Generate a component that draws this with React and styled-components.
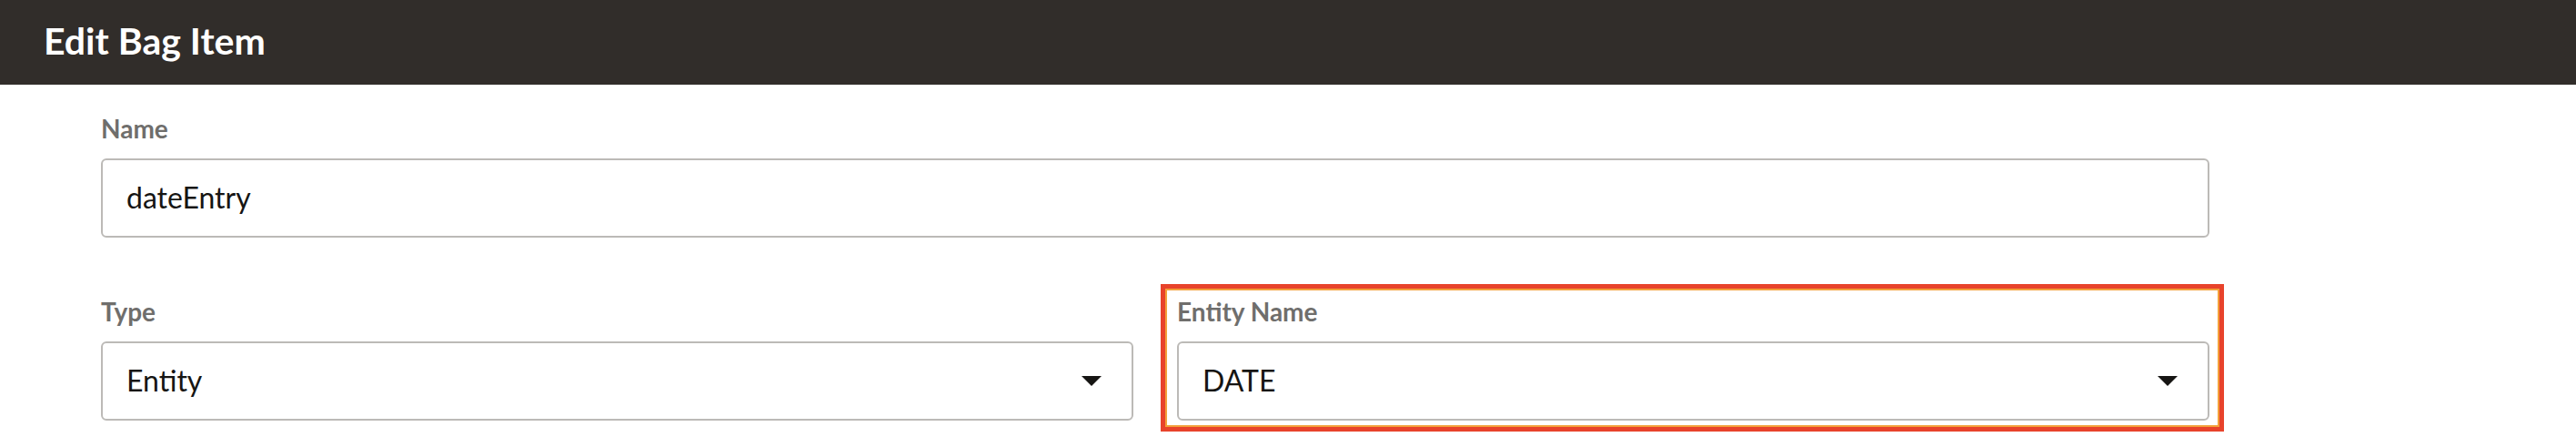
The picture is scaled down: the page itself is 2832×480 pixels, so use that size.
import React from 'react';
import styled, { createGlobalStyle } from 'styled-components';

const GlobalStyle = createGlobalStyle`
  html, body {
    margin: 0;
    padding: 0;
    background: #ffffff;
  }
  body {
    font-family: Lato, "Noto Sans", "Liberation Sans", sans-serif;
    color: #161513;
  }
`;

const Page = styled.div`
  width: 2832px;
  height: 480px;
  background: #ffffff;
  overflow: hidden;
`;

const Header = styled.header`
  height: 93px;
  display: flex;
  align-items: center;
  padding: 0 0 4px 48px;
  box-sizing: border-box;
  background: #312d2a;
`;

const Title = styled.h1`
  margin: 0;
  font-size: 41px;
  font-weight: 700;
  line-height: 1.2;
  color: #ffffff;
`;

const Form = styled.div`
  width: 2318px;
  padding: 30px 0 0 111px;
`;

const Row = styled.div`
  display: grid;
  grid-template-columns: ${({ $cols }) => ($cols === 2 ? '1fr 1fr' : '1fr')};
  column-gap: 48px;
  margin-top: ${({ $first }) => ($first ? '0' : '63px')};
`;

const Field = styled.div`
  display: flex;
  flex-direction: column;
  gap: 15px;
  position: relative;

  ${({ $highlight }) =>
    $highlight &&
    `
    &::before {
      content: '';
      position: absolute;
      top: -12px;
      right: -16px;
      bottom: -12px;
      left: -18px;
      border: 5px solid #e8432b;
      box-shadow: inset 0 0 0 2px #f3a03a;
      pointer-events: none;
    }
  `}
`;

const Label = styled.label`
  font-size: 28px;
  font-weight: 700;
  line-height: 36px;
  color: #6f6e6c;
`;

const Control = styled.div`
  height: 87px;
  box-sizing: border-box;
  display: flex;
  align-items: center;
  justify-content: space-between;
  padding: 0 33px 0 26px;
  border: 2px solid #bcbab7;
  border-radius: 6px;
  background: #ffffff;
  font-size: 32px;
  line-height: 1.2;
  color: #161513;
`;

const Caret = () => (
  <svg width="22" height="11" viewBox="0 0 22 11" aria-hidden="true">
    <polygon points="0,0 22,0 11,11" fill="#161513" />
  </svg>
);

const TextField = ({ label, value }) => (
  <Field>
    <Label>{label}</Label>
    <Control>{value}</Control>
  </Field>
);

const SelectField = ({ label, value, highlight }) => (
  <Field $highlight={highlight}>
    <Label>{label}</Label>
    <Control>
      <span>{value}</span>
      <Caret />
    </Control>
  </Field>
);

const App = () => (
  <Page>
    <GlobalStyle />
    <Header>
      <Title>Edit Bag Item</Title>
    </Header>
    <Form>
      <Row $first>
        <TextField label="Name" value="dateEntry" />
      </Row>
      <Row $cols={2}>
        <SelectField label="Type" value="Entity" />
        <SelectField label="Entity Name" value="DATE" highlight />
      </Row>
    </Form>
  </Page>
);

export default App;
